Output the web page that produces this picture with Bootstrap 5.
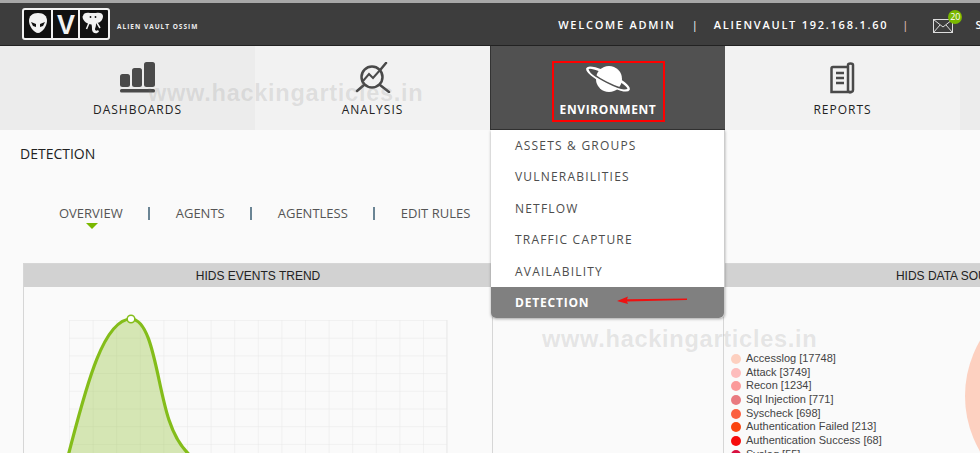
<!DOCTYPE html>
<html lang="en">

<head>
    <meta charset="UTF-8">
    <title>AlienVault OSSIM - Detection</title>
    <link href="https://cdn.jsdelivr.net/npm/bootstrap@5.3.0/dist/css/bootstrap.min.css" rel="stylesheet">
    <style>
        html, body { height: 453px; overflow: hidden; }
        body { background: #fafafa; font-family: "Open Sans", sans-serif; color: #222; position: relative; }

        /* top bar */
        .top-bar { height: 46px; background: #3d3d3d; border-top: 3px solid #a8a8a8; border-bottom: 1px solid #222; padding-left: 22px; color: #fff; white-space: nowrap; overflow: hidden; }
        .brand-text { font-size: 6.5px; font-weight: 700; letter-spacing: 1px; margin-left: 7px; margin-top: 5px; color: #eee; }
        .top-info { font-size: 11px; font-weight: 600; letter-spacing: 1.75px; margin-left: auto; margin-right: -60px; margin-top: 3px; flex: none; }
        .sep-top { margin: 0 16px; font-weight: 400; letter-spacing: 0; }
        .sep-top.pink { margin: 0 14px; color: #f0c8c8; }
        .mail-wrap { position: relative; margin: 0 22px 0 11px; height: 14px; }
        .mail-count { position: absolute; left: 15px; top: -9px; width: 14px; height: 14px; border-radius: 50%; background: #7ab800; font-size: 9px; font-weight: 400; letter-spacing: 0; line-height: 14px; text-align: center; }

        /* main tabs */
        .main-nav { height: 84px; }
        .nav-tab { width: 235px; flex: none; background: #f2f2f2; color: #222; font-size: 12px; font-weight: 400; letter-spacing: 1px; line-height: 18px; text-align: center; padding-top: 16px; }
        .nav-tab svg { display: block; margin: 0 auto 8px; }
        .nav-tab svg.tall-icon { margin-bottom: 7px; }
        .nav-tab.first { width: 255px; padding-left: 20px; background: #ececec; }
        .nav-tab.rest { flex: 1; background: #ececec; }
        .nav-tab.current { background: #515151; color: #fff; font-weight: 700; letter-spacing: .6px; padding-top: 15px; border-left: 1px solid #333; border-bottom: 1px solid #333; }
        .mark-box { width: 113px; height: 61px; margin: 0 auto; border: 2px solid #f00; }
        .mark-box svg { margin-bottom: 7px; }

        /* page title + subnav */
        .page-title { font-size: 14px; padding: 14px 0 0 20px; line-height: 19px; }
        .sub-nav { margin: 39px 0 0 59px; font-size: 13px; color: #555; line-height: 17px; height: 22px; }
        .sub-item { position: relative; }
        .sub-item.active::after { content: ""; position: absolute; left: 27px; top: 18px; border: 6px solid transparent; border-top-color: #7ab800; border-bottom: 0; }
        .sub-sep { width: 2px; height: 13px; background: #6a8494; margin: 0 25.5px; }

        /* panels */
        .panels { margin: 39px 0 0 23px; width: 957px; height: 190px; overflow: hidden; }
        .panel-box { width: 470px; height: 300px; border: 1px solid #d6d6d6; flex: none; position: relative; }
        .panel-head { height: 23px; background: #d2d2d2; font-family: "Liberation Sans", sans-serif; font-size: 12px; line-height: 24px; text-align: center; color: #222; }
        .panel-gap { width: 230px; flex: none; }
        .data-body { padding: 65px 0 0 7px; font-family: "Liberation Sans", sans-serif; font-size: 11px; color: #444; }
        .legend-row { height: 13.7px; line-height: 13.7px; }
        .legend-dot { width: 10px; height: 10px; border-radius: 50%; margin-right: 5px; flex: none; }
        .pie-chart { position: absolute; left: 240px; top: 23px; }

        /* environment dropdown */
        .env-menu { position: absolute; left: 491px; top: 130px; width: 234px; background: #fff; border: 0; border-right: 1px solid #ccc; border-radius: 0 0 5px 5px; box-shadow: 0 1px 3px rgba(0, 0, 0, .35); font-size: 12px; letter-spacing: 1.2px; }
        .env-menu .list-group-item { height: 31.4px; border: 0; padding: 0 0 0 24px; line-height: 31.4px; color: #4d4d4d; background: transparent; }
        .env-menu .list-group-item.active { background: #808080; color: #fff; font-weight: 700; letter-spacing: .8px; border-radius: 0 0 5px 5px; margin-top: 0; }
        .red-arrow { position: absolute; left: 617px; top: 295px; z-index: 3; }

        /* watermark */
        .wm-text { position: absolute; z-index: 3; font-family: "Liberation Sans", sans-serif; font-weight: 700; font-size: 23.6px; letter-spacing: .7px; line-height: 26px; color: rgba(120, 120, 120, .17); white-space: nowrap; }
        .wm-one { left: 148px; top: 80px; }
        .wm-two { left: 542px; top: 326px; }
    </style>
</head>

<body>

    <!-- Header -->
    <div class="top-bar d-flex align-items-center">
        <svg width="88" height="32" viewBox="0 0 88 32">
            <rect x="1" y="1" width="86" height="30" rx="2" fill="#111" stroke="#f2f2f2" stroke-width="2"/>
            <rect x="29" y="2" width="2" height="28" fill="#f2f2f2"/>
            <rect x="56" y="2" width="2" height="28" fill="#f2f2f2"/>
            <path d="M16 5c6 0 9 3 9 8 0 5-5 12-9 12S7 18 7 13c0-5 3-8 9-8z" fill="#f2f2f2"/>
            <path d="M9 14l5 2 0 3-3-1zM23 14l-5 2 0 3 3-1z" fill="#111"/>
            <text x="44" y="26" text-anchor="middle" font-family="Liberation Sans" font-weight="700" font-size="27" fill="#f2f2f2">V</text>
            <path d="M61 8c0-3 4-4 7-3h6c3-1 7 0 7 3 0 4-3 7-6 7l-1 1c0 3-1 4-1 5 0 2 2 2 3 1l1 1.500c-2 3-7 2-7-2 0-2 0-3-.5-5-3 0-9-3-9-8z" fill="#f2f2f2"/>
            <circle cx="68.500" cy="9" r=".9" fill="#111"/>
            <circle cx="73.500" cy="9" r=".9" fill="#111"/>
            <path d="M67 15l-2.500 6M75 15l3 5" fill="none" stroke="#f2f2f2" stroke-width="1.500"/>
        </svg>
        <span class="brand-text">ALIEN VAULT OSSIM</span>
        <div class="top-info d-flex align-items-center">
            <span>WELCOME ADMIN</span><span class="sep-top">|</span>
            <span>ALIENVAULT 192.168.1.60</span><span class="sep-top pink">|</span>
            <span class="mail-wrap">
                <svg width="20" height="14" viewBox="0 0 20 14" class="d-block"><rect x=".5" y=".5" width="19" height="13" fill="none" stroke="#ddd"/><path d="M.5.5L10 8 19.5.5M.5 13.5L7 6M19.5 13.5L13 6" fill="none" stroke="#ddd"/></svg>
                <span class="mail-count">20</span>
            </span>
            <span>SETTINGS</span>
        </div>
    </div>

    <!-- Main navigation -->
    <div class="main-nav d-flex">
        <div class="nav-tab first">
            <svg width="36" height="31" viewBox="0 0 36 31" fill="#4a4a4a">
                <rect x="0" y="12" width="10" height="13" rx="2.5"/>
                <rect x="12" y="6" width="10" height="19" rx="2.5"/>
                <rect x="24" y="0" width="11" height="25" rx="2.5"/>
                <rect x="0" y="27" width="35" height="3.5" rx="1.5"/>
            </svg>
            DASHBOARDS
        </div>
        <div class="nav-tab">
            <svg width="38" height="31" viewBox="0 0 38 31" fill="none" stroke="#4a4a4a" stroke-width="2.5">
                <circle cx="18" cy="15" r="10.5"/>
                <path d="M26 23l9 7M10 23l-7 6M32 1L27 7" stroke-linecap="round"/>
                <path d="M9 19l6-7 4 4 8-9" stroke-width="2"/>
            </svg>
            ANALYSIS
        </div>
        <div class="nav-tab current">
            <div class="mark-box">
                <svg width="46" height="31" viewBox="0 0 46 31">
                    <circle cx="24" cy="16" r="13" fill="#fff"/>
                    <g transform="rotate(27 23 16)" fill="none">
                        <ellipse cx="23" cy="16" rx="23" ry="5" stroke="#fff" stroke-width="2.500"/>
                        <path d="M3 16A20 3.500 0 0 0 43 16" stroke="#515151" stroke-width="1.500"/>
                    </g>
                </svg>
                ENVIRONMENT
            </div>
        </div>
        <div class="nav-tab">
            <svg class="tall-icon" width="25" height="32" viewBox="0 0 25 32" fill="none" stroke="#4a4a4a" stroke-width="2.5">
                <path d="M18 5H3a1.500 1.500 0 0 0-1.500 1.500V30h20"/>
                <path d="M18 30V3c0-2 5-2 5 0v25c0 2-2 2.500-4 2"/>
                <path d="M6 11h8M6 16h8M6 21h8"/>
            </svg>
            REPORTS
        </div>
        <div class="nav-tab rest"></div>
    </div>

    <!-- Content -->
    <div class="page-title">DETECTION</div>

    <div class="sub-nav d-flex align-items-center">
        <span class="sub-item active">OVERVIEW</span><span class="sub-sep"></span>
        <span class="sub-item">AGENTS</span><span class="sub-sep"></span>
        <span class="sub-item">AGENTLESS</span><span class="sub-sep"></span>
        <span class="sub-item">EDIT RULES</span>
    </div>

    <div class="panels d-flex">
        <div class="panel-box">
            <div class="panel-head">HIDS EVENTS TREND</div>
            <svg width="468" height="180" viewBox="23 287 468 180" class="d-block">
                <defs>
                    <pattern id="gridCell" x="68" y="320" width="23.6" height="17.7" patternUnits="userSpaceOnUse">
                        <path d="M23.6 0H0V17.7" fill="none" stroke="#e8e8e8"/>
                    </pattern>
                </defs>
                <rect x="68" y="320" width="378" height="150" fill="url(#gridCell)"/>
                <line x1="446" y1="320" x2="446" y2="470" stroke="#e8e8e8"/>
                <path d="M66 460C82 400 100 319 130 319 152 319 156 385 168 420 174 438 182 450 192 458V480H66z" fill="#8cbe28" fill-opacity=".33"/>
                <path d="M66 460C82 400 100 319 130 319 152 319 156 385 168 420 174 438 182 450 192 458" fill="none" stroke="#84bd1a" stroke-width="3.2"/>
                <circle cx="130" cy="319" r="3.800" fill="#fff" stroke="#84bd1a" stroke-width="1.500"/>
            </svg>
        </div>
        <div class="panel-gap"></div>
        <div class="panel-box">
            <div class="panel-head">HIDS DATA SOURCES</div>
            <div class="data-body">
                <div class="legend-row d-flex align-items-center"><span class="legend-dot" style="background:#fdd0c0"></span>Accesslog [17748]</div>
                <div class="legend-row d-flex align-items-center"><span class="legend-dot" style="background:#fdbcbc"></span>Attack [3749]</div>
                <div class="legend-row d-flex align-items-center"><span class="legend-dot" style="background:#fb9a9a"></span>Recon [1234]</div>
                <div class="legend-row d-flex align-items-center"><span class="legend-dot" style="background:#e97a80"></span>Sql Injection [771]</div>
                <div class="legend-row d-flex align-items-center"><span class="legend-dot" style="background:#fb6040"></span>Syscheck [698]</div>
                <div class="legend-row d-flex align-items-center"><span class="legend-dot" style="background:#fa4510"></span>Authentication Failed [213]</div>
                <div class="legend-row d-flex align-items-center"><span class="legend-dot" style="background:#f60b0b"></span>Authentication Success [68]</div>
                <div class="legend-row d-flex align-items-center"><span class="legend-dot" style="background:#d8103f"></span>Syslog [55]</div>
            </div>
            <svg class="pie-chart" width="230" height="230" viewBox="0 0 230 230"><circle cx="111" cy="109" r="110" fill="#fdd0c0"/></svg>
        </div>
    </div>

    <!-- Environment dropdown -->
    <div class="list-group env-menu">
        <div class="list-group-item">ASSETS &amp; GROUPS</div>
        <div class="list-group-item">VULNERABILITIES</div>
        <div class="list-group-item">NETFLOW</div>
        <div class="list-group-item">TRAFFIC CAPTURE</div>
        <div class="list-group-item">AVAILABILITY</div>
        <div class="list-group-item active">DETECTION</div>
    </div>

    <!-- Annotation arrow -->
    <svg class="red-arrow" width="71" height="10" viewBox="0 0 71 10">
        <path d="M0 6L11 1.500 10 4.300 70 3.500 70 5 10 6.500 11 9z" fill="#ee1111"/>
    </svg>

    <div class="wm-text wm-one">www.hackingarticles.in</div>
    <div class="wm-text wm-two">www.hackingarticles.in</div>

    <script src="https://cdn.jsdelivr.net/npm/bootstrap@5.3.0/dist/js/bootstrap.bundle.min.js"></script>
</body>

</html>
